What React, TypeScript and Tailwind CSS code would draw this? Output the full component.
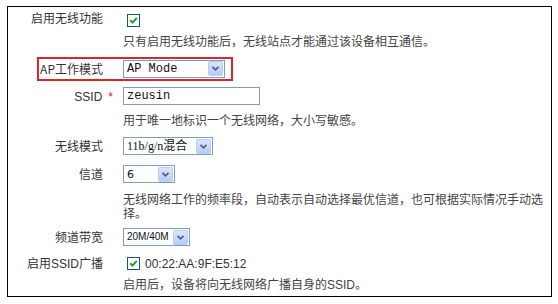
const cjk = '"Noto Sans CJK SC", "Liberation Sans", sans-serif';

const Check = () => (
  <span className="inline-flex h-[13px] w-[13px] items-center justify-center border border-[#1c5180] bg-white">
    <svg width="9" height="9" viewBox="0 0 9 9">
      <path d="M1.2 4.2 L3.5 6.6 L7.8 1.8" fill="none" stroke="#21a121" strokeWidth="2" />
    </svg>
  </span>
);

const Arrow = () => (
  <span className="flex h-[15px] w-[15px] shrink-0 items-center justify-center rounded-[2px] border border-[#b9cdf6] bg-gradient-to-b from-[#dbe6fd] to-[#b6cbf8]">
    <svg width="9" height="7" viewBox="0 0 9 7">
      <path d="M1.5 1.8 L4.5 4.8 L7.5 1.8" fill="none" stroke="#4d6185" strokeWidth="1.8" />
    </svg>
  </span>
);

type SelectProps = { value: string; width: string; font?: string; size?: string };

const Select = ({ value, width, font, size }: SelectProps) => (
  <div className={`flex h-[18px] items-center justify-between border border-[#7f9db9] bg-white pl-[3px] pr-[1px] ${width}`}>
    <span
      className={`${size ?? "text-[12px]"} leading-none whitespace-nowrap text-[#111]`}
      style={{ fontFamily: font ?? '"Liberation Mono", "Noto Sans CJK SC", monospace' }}
    >
      {value}
    </span>
    <Arrow />
  </div>
);

const Label = ({ children }: { children: React.ReactNode }) => (
  <div className="w-[95px] shrink-0 text-right text-[12px] leading-none text-[#333]">{children}</div>
);

const Help = ({ children }: { children: React.ReactNode }) => (
  <div className="pl-[115px] text-[12px] leading-[14px] text-[#444]">{children}</div>
);

export default function App() {
  return (
    <div className="h-[304px] w-[558px] bg-white pl-[7px] pt-[6px]" style={{ fontFamily: cjk }}>
      <div className="flex h-[291px] w-[545px] flex-col border border-black">
        <div className="flex h-[22px] items-center gap-[20px]">
          <Label>启用无线功能</Label>
          <div className="pl-[4px]">
            <Check />
          </div>
        </div>

        <div className="flex h-[24px] items-center">
          <Help>只有启用无线功能后，无线站点才能通过该设备相互通信。</Help>
        </div>

        <div className="flex h-[31px] items-center pl-[29px]">
          <div className="flex h-[24px] w-[196px] items-center gap-[20px] border-2 border-[#d7262c]">
            <div className="w-[64px] shrink-0 text-right text-[12px] leading-none text-[#333]">AP工作模式</div>
            <Select value="AP Mode" width="w-[102px]" />
          </div>
        </div>

        <div className="flex h-[24px] items-center gap-[20px]">
          <Label>
            <span className="-mr-[10px] inline-flex gap-[6px]" style={{ fontFamily: '"Liberation Sans", sans-serif' }}>
              SSID <span className="text-[#e02020]">*</span>
            </span>
          </Label>
          <div
            className="flex h-[18px] w-[137px] items-center border border-[#7f9db9] bg-white pl-[3px] text-[12px] text-[#111]"
            style={{ fontFamily: '"Liberation Mono", monospace' }}
          >
            zeusin
          </div>
        </div>

        <div className="flex h-[24px] items-center">
          <Help>用于唯一地标识一个无线网络，大小写敏感。</Help>
        </div>

        <div className="flex h-[28px] items-center gap-[20px]">
          <Label>无线模式</Label>
          <Select value="11b/g/n混合" width="w-[90px]" font='"Liberation Serif", "Noto Sans CJK SC", serif' />
        </div>

        <div className="flex h-[28px] items-center gap-[20px]">
          <Label>信道</Label>
          <Select value="6" width="w-[52px]" size="text-[11px]" font='"DejaVu Sans", sans-serif' />
        </div>

        <div className="flex h-[36px] items-center">
          <Help>无线网络工作的频率段，自动表示自动选择最优信道，也可根据实际情况手动选择。</Help>
        </div>

        <div className="flex h-[26px] items-center gap-[20px]">
          <Label>频道带宽</Label>
          <Select value="20M/40M" width="w-[67px]" size="text-[10px]" font='"Liberation Sans", sans-serif' />
        </div>

        <div className="flex h-[27px] items-center gap-[20px]">
          <Label>
            启用<span style={{ fontFamily: '"Liberation Sans", sans-serif' }}>SSID</span>广播
          </Label>
          <div className="flex items-center gap-[5px] pl-[4px]">
            <Check />
            <span className="text-[12px] text-[#333]" style={{ fontFamily: '"Liberation Sans", sans-serif' }}>
              00:22:AA:9F:E5:12
            </span>
          </div>
        </div>

        <div className="flex h-[14px] items-center">
          <Help>
            启用后，设备将向无线网络广播自身的<span style={{ fontFamily: '"Liberation Sans", sans-serif' }}>SSID</span>。
          </Help>
        </div>
      </div>
    </div>
  );
}
